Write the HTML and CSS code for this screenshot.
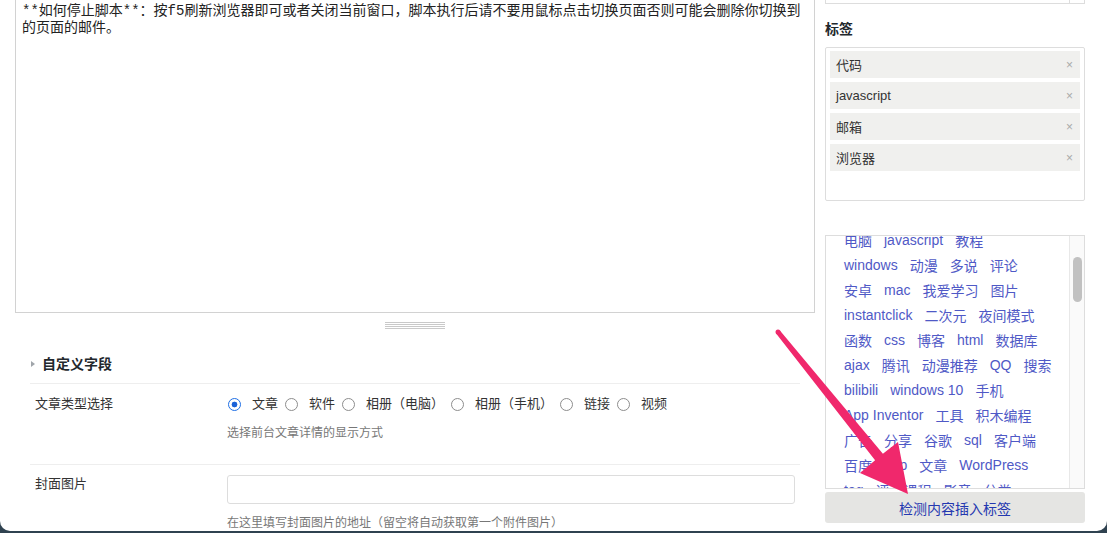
FILE: index.html
```html
<!DOCTYPE html>
<html lang="zh-CN">
<head>
<meta charset="utf-8">
<title>编辑文章</title>
<link rel="stylesheet" href="styles.css">
</head>
<body>
<div class="window">
  <div class="layout">
    <div class="main">
      <div class="editor">
        <p class="editor-text">**如何停止脚本**：按f5刷新浏览器即可或者关闭当前窗口，脚本执行后请不要用鼠标点击切换页面否则可能会删除你切换到<br>的页面的邮件。</p>
      </div>
      <div class="resize-handle"></div>
      <div class="fields">
        <div class="fields-title"><span class="caret"></span>自定义字段</div>
        <div class="field-row first">
          <div class="field-label">文章类型选择</div>
          <div class="field-value">
            <div class="radio-group">
              <label class="radio"><input type="radio" name="ptype" checked><span>文章</span></label>
              <label class="radio"><input type="radio" name="ptype"><span>软件</span></label>
              <label class="radio"><input type="radio" name="ptype"><span>相册（电脑）</span></label>
              <label class="radio"><input type="radio" name="ptype"><span>相册（手机）</span></label>
              <label class="radio"><input type="radio" name="ptype"><span>链接</span></label>
              <label class="radio"><input type="radio" name="ptype"><span>视频</span></label>
            </div>
            <p class="field-desc">选择前台文章详情的显示方式</p>
          </div>
        </div>
        <div class="field-row second">
          <div class="field-label">封面图片</div>
          <div class="field-value">
            <input type="text" class="text-input">
            <p class="field-desc desc-2">在这里填写封面图片的地址（留空将自动获取第一个附件图片）</p>
          </div>
        </div>
      </div>
    </div>
    <aside class="side">
      <div class="prev-box"><span class="prev-scroll"></span></div>
      <h3 class="side-title">标签</h3>
      <div class="tag-box">
        <div class="tag-item"><span>代码</span><span class="tag-x">×</span></div>
        <div class="tag-item"><span>javascript</span><span class="tag-x">×</span></div>
        <div class="tag-item"><span>邮箱</span><span class="tag-x">×</span></div>
        <div class="tag-item"><span>浏览器</span><span class="tag-x">×</span></div>
      </div>
      <div class="cloud">
        <div class="cloud-inner">
          <div class="cloud-row"><a>电脑</a><a>javascript</a><a>教程</a></div>
          <div class="cloud-row"><a>windows</a><a>动漫</a><a>多说</a><a>评论</a></div>
          <div class="cloud-row"><a>安卓</a><a>mac</a><a>我爱学习</a><a>图片</a></div>
          <div class="cloud-row"><a>instantclick</a><a>二次元</a><a>夜间模式</a></div>
          <div class="cloud-row"><a>函数</a><a>css</a><a>博客</a><a>html</a><a>数据库</a></div>
          <div class="cloud-row"><a>ajax</a><a>腾讯</a><a>动漫推荐</a><a>QQ</a><a>搜索</a></div>
          <div class="cloud-row"><a>bilibili</a><a>windows 10</a><a>手机</a></div>
          <div class="cloud-row"><a>App Inventor</a><a>工具</a><a>积木编程</a></div>
          <div class="cloud-row"><a>广告</a><a>分享</a><a>谷歌</a><a>sql</a><a>客户端</a></div>
          <div class="cloud-row"><a>百度</a><a>php</a><a>文章</a><a>WordPress</a></div>
          <div class="cloud-row"><a>tag</a><a>评测课程</a><a>影音</a><a>分类</a></div>
        </div>
        <div class="cloud-scrollbar"><span class="thumb"></span></div>
      </div>
      <button class="detect-btn" type="button">检测内容插入标签</button>
    </aside>
  </div>
  <svg class="annotation" width="1107" height="533" viewBox="0 0 1107 533">
    <circle cx="778" cy="332" r="2.5" fill="#f0286c"/>
    <polygon fill="#f0286c" points="779.9,330.4 882.9,453.8 898,442 908,494 860,473 875.1,460.2 776.1,333.6"/>
  </svg>
</div>
</body>
</html>
```

FILE: styles.css
```css
* { box-sizing: border-box; }

html { background: #2f4250; }

body {
  margin: 0;
  font-family: "Liberation Sans", "Noto Sans CJK SC", sans-serif;
  color: #32373c;
}

.window {
  position: relative;
  width: 1107px;
  height: 531px;
  background: #fff;
  border-radius: 0 0 10px 10px;
  overflow: hidden;
}

.layout {
  display: flex;
  align-items: flex-start;
  gap: 10px;
  padding-left: 15px;
}

/* ---------- main column ---------- */
.main { width: 800px; }

.editor {
  height: 313px;
  border: 1px solid #d2d2d2;
  border-top: 0;
  padding: 3px 7px 0 6px;
}

.editor-text {
  margin: 0;
  font-family: "Liberation Mono", "Noto Sans CJK SC", monospace;
  font-size: 14px;
  line-height: 17px;
  color: #222;
}

.resize-handle {
  width: 60px;
  height: 7px;
  margin: 9px auto 0;
  background: repeating-linear-gradient(to bottom, #c9c9c9 0 1px, transparent 1px 2px);
}

.fields { margin: 25px 15px 0 15px; }

.fields-title {
  display: flex;
  align-items: center;
  padding: 0 0 9px 1px;
  font-size: 14px;
  font-weight: bold;
  line-height: 20px;
  color: #23282d;
  border-bottom: 1px solid #eee;
}

.caret {
  width: 0;
  height: 0;
  border-left: 4px solid #a0a5aa;
  border-top: 3.5px solid transparent;
  border-bottom: 3.5px solid transparent;
  margin-right: 7px;
}

.field-row { display: flex; }
.field-row.first { padding: 11px 0 23px; border-bottom: 1px solid #eee; }
.field-row.second { padding-top: 10px; }

.field-label {
  width: 197px;
  padding-left: 5px;
  font-size: 13px;
  line-height: 18px;
  color: #333;
}

.field-value { flex: 1; }

.radio-group {
  display: flex;
  align-items: center;
  height: 18px;
  padding-left: 1px;
}

.radio {
  display: flex;
  align-items: center;
  font-size: 13px;
  line-height: 18px;
  color: #333;
  margin-right: 7px;
}

.radio input {
  -webkit-appearance: none;
  appearance: none;
  width: 13px;
  height: 13px;
  margin: 0 11px 0 0;
  border: 1px solid #8d8d8d;
  border-radius: 50%;
  background: #fff;
}

.radio input:checked {
  border: 1.5px solid #1f6fe5;
  background: radial-gradient(circle, #1a62d8 0 2.6px, #fff 3.2px);
}

.field-desc {
  margin: 12px 0 0;
  font-size: 12px;
  line-height: 16px;
  color: #777;
}

.field-desc.desc-2 { margin-top: 11px; }

.text-input {
  display: block;
  width: 568px;
  height: 29px;
  margin: 0;
  border: 1px solid #ddd;
  border-radius: 3px;
  background: #fff;
}

/* ---------- side column ---------- */
.side { width: 260px; }

.prev-box {
  display: flex;
  justify-content: flex-end;
  height: 4px;
  border: 1px solid #ddd;
  border-top: 0;
}

.prev-scroll {
  width: 15px;
  border-left: 1px solid #ddd;
}

.side-title {
  margin: 15px 0 8px;
  font-size: 14px;
  font-weight: bold;
  line-height: 20px;
  color: #23282d;
}

.tag-box {
  height: 154px;
  border: 1px solid #ddd;
  border-radius: 2px;
  padding: 3px 4px;
  display: flex;
  flex-direction: column;
  gap: 4px;
}

.tag-item {
  height: 27px;
  flex: none;
  display: flex;
  align-items: center;
  justify-content: space-between;
  padding: 0 7px 0 6px;
  background: #f0f0ee;
  font-size: 13px;
  color: #333;
}

.tag-x {
  font-size: 12px;
  color: #aaa;
}

.cloud {
  margin-top: 34px;
  height: 254px;
  border: 1px solid #ddd;
  display: flex;
  overflow: hidden;
}

.cloud-inner {
  flex: 1;
  padding-left: 18px;
  margin-top: -9px;
}

.cloud-row {
  display: flex;
  align-items: center;
  gap: 12px;
  height: 25px;
  font-size: 14px;
  white-space: nowrap;
}

.cloud-row a { color: #4f59c6; }

.cloud-scrollbar {
  width: 15px;
  flex: none;
  border-left: 1px solid #e8e8e8;
  background: #fafafa;
  padding: 21px 0 0 3px;
}

.thumb {
  display: block;
  width: 9px;
  height: 45px;
  border-radius: 5px;
  background: #c1c1c1;
}

.detect-btn {
  display: block;
  width: 260px;
  height: 31px;
  margin-top: 3px;
  border: 0;
  border-radius: 3px;
  background: #e5e5e3;
  font-family: "Liberation Sans", "Noto Sans CJK SC", sans-serif;
  font-size: 14px;
  color: #2438b0;
  padding: 0;
}

/* ---------- annotation overlay ---------- */
.annotation {
  position: absolute;
  left: 0;
  top: 0;
  pointer-events: none;
}
```
